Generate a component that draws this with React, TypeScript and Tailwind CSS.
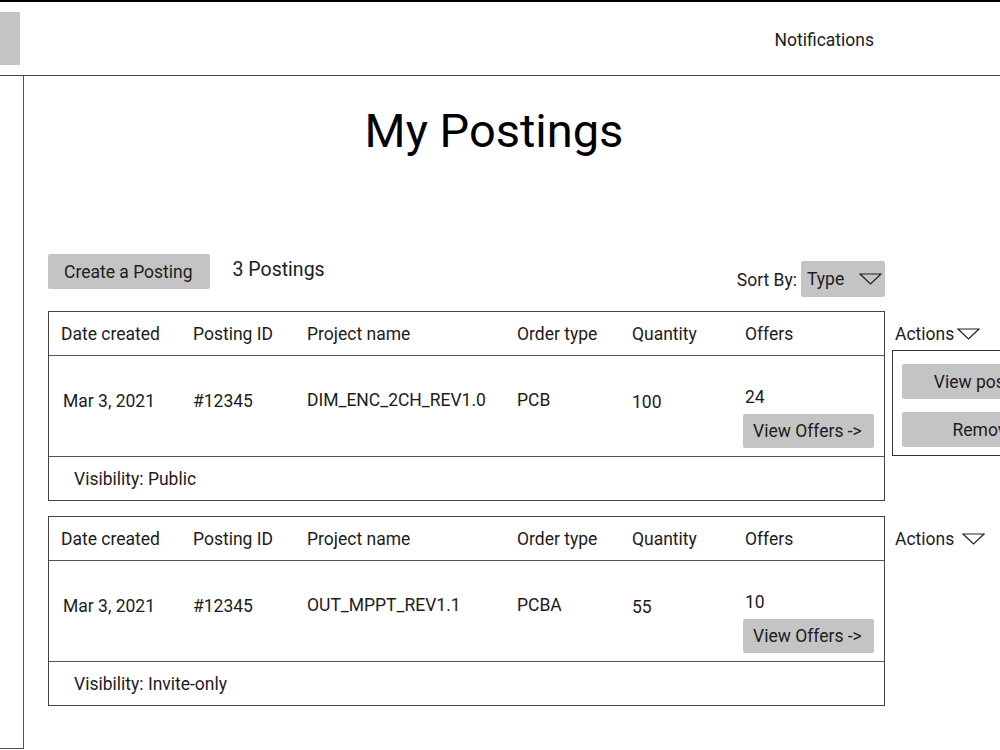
import React from "react";

type Posting = {
  date: string;
  id: string;
  project: string;
  orderType: string;
  quantity: string;
  offers: string;
  visibility: string;
  menuOpen: boolean;
};

const postings: Posting[] = [
  {
    date: "Mar 3, 2021",
    id: "#12345",
    project: "DIM_ENC_2CH_REV1.0",
    orderType: "PCB",
    quantity: "100",
    offers: "24",
    visibility: "Public",
    menuOpen: true,
  },
  {
    date: "Mar 3, 2021",
    id: "#12345",
    project: "OUT_MPPT_REV1.1",
    orderType: "PCBA",
    quantity: "55",
    offers: "10",
    visibility: "Invite-only",
    menuOpen: false,
  },
];

function Caret() {
  return (
    <svg width="23" height="12" viewBox="0 0 23 12" className="shrink-0">
      <polygon points="1,1 22,1 11.5,11" fill="none" stroke="#222" strokeWidth="1.2" />
    </svg>
  );
}

function PostingRow({ p }: { p: Posting }) {
  return (
    <div className="flex items-start">
      <div className="w-[837px] h-[190px] shrink-0 border border-[#444] flex flex-col">
        <div className="h-[44px] shrink-0 border-b border-[#555] grid grid-cols-[132px_114px_210px_115px_113px_1fr] items-center pl-[12px]">
          <span>Date created</span>
          <span>Posting ID</span>
          <span>Project name</span>
          <span>Order type</span>
          <span>Quantity</span>
          <span>Offers</span>
        </div>
        <div className="h-[101px] shrink-0 border-b border-[#555] grid grid-cols-[132px_114px_210px_115px_113px_1fr] items-start pl-[12px]">
          <span className="pt-[35px] pl-[2px]">{p.date}</span>
          <span className="pt-[35px]">{p.id}</span>
          <span className="pt-[34px]">{p.project}</span>
          <span className="pt-[34px]">{p.orderType}</span>
          <span className="pt-[36px]">{p.quantity}</span>
          <div className="pt-[31px] flex flex-col items-start -ml-[2px]">
            <span className="pl-[2px]">{p.offers}</span>
            <button className="mt-[7px] w-[131px] h-[34px] bg-[#c4c4c4] rounded-[2px] text-left pl-[10px]">
              View Offers -&gt;
            </button>
          </div>
        </div>
        <div className="flex-1 flex items-center pl-[25px]">Visibility: {p.visibility}</div>
      </div>
      <div className="ml-[7px] flex flex-col shrink-0">
        <div className="h-[45px] flex items-center pl-[3px] gap-[3px]">
          <span>Actions</span>
          {p.menuOpen ? <Caret /> : <span className="ml-[5px] flex"><Caret /></span>}
        </div>
        {p.menuOpen && (
          <div className="mt-[-6px] w-[190px] h-[106px] border border-[#333] pl-[9px] pt-[13px] flex flex-col gap-[13px]">
            <button className="w-[164px] h-[35px] bg-[#c4c4c4] rounded-[2px]">View posting</button>
            <button className="w-[164px] h-[35px] bg-[#c4c4c4] rounded-[2px]">Remove</button>
          </div>
        )}
      </div>
    </div>
  );
}

export default function App() {
  return (
    <div className="w-[1000px] h-[750px] bg-white overflow-hidden text-[17.5px] leading-[20px] text-[#1c1c1c] font-['Roboto',sans-serif]">
      <header className="h-[76px] border-t-2 border-t-black border-b border-b-[#444] flex items-center">
        <div className="w-[20px] h-[53px] bg-[#c4c4c4] mt-[-1px]" />
        <span className="ml-auto mr-[126px] mt-[2px]">Notifications</span>
      </header>

      <div className="flex h-[674px]">
        <aside className="w-[24px] h-[673px] shrink-0 border-r border-b border-[#555]" />

        <main className="flex-1 overflow-hidden">
          <h1 className="mt-[31px] pr-[36px] text-center text-[47px] leading-none text-black">My Postings</h1>

          <div className="ml-[24px] mt-[100px] w-[837px] flex items-end justify-between">
            <div className="flex items-center mb-[8px]">
              <button className="h-[35px] pl-[16px] pr-[17px] bg-[#c4c4c4] rounded-[2px]">Create a Posting</button>
              <span className="ml-[23px] text-[19.5px] -mt-[3px]">3 Postings</span>
            </div>
            <div className="flex items-center">
              <span className="mt-[2px]">Sort By:</span>
              <div className="ml-[4px] w-[84px] h-[36px] bg-[#c4c4c4] rounded-[2px] flex items-center pl-[6px] gap-[15px]">
                <span>Type</span>
                <Caret />
              </div>
            </div>
          </div>

          <div className="ml-[24px] mt-[14px] flex flex-col gap-[15px]">
            {postings.map((p, i) => (
              <PostingRow key={i} p={p} />
            ))}
          </div>
        </main>
      </div>
    </div>
  );
}
